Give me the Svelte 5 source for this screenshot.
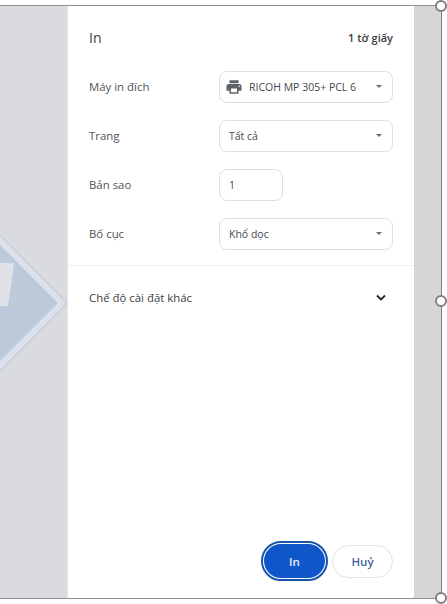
<script>
    const rows = [
        { label: "Máy in đích", value: "RICOH MP 305+ PCL 6", printer: true },
        { label: "Trang", value: "Tất cả" },
        { label: "Bản sao", value: "1", small: true },
        { label: "Bố cục", value: "Khổ dọc" },
    ];
</script>

<div class="page">
    <div class="frame">
        <div class="preview">
            <svg class="sheet" width="67" height="160" viewBox="0 0 67 160">
                <path d="M-1 2 L67 71 L-1 140 Z" fill="#dce2ec" stroke="#c4cedc" stroke-width="1.5" />
                <path d="M0 13 L58 71 L0 129 Z" fill="#bccadb" />
                <path d="M0 31 H14 L8 74 H0 Z" fill="#e0e2e7" />
            </svg>
        </div>

        <div class="panel">
            <div class="header">
                <h1>In</h1>
                <span class="count">1 tờ giấy</span>
            </div>

            {#each rows as row}
                <div class="row">
                    <span class="label">{row.label}</span>
                    {#if row.small}
                        <div class="field small">{row.value}</div>
                    {:else}
                        <div class="field">
                            {#if row.printer}
                                <svg class="printer" width="18" height="18" viewBox="0 0 24 24">
                                    <path fill="#5f6368" d="M19 8H5c-1.66 0-3 1.34-3 3v6h4v4h12v-4h4v-6c0-1.66-1.34-3-3-3zm-3 11H8v-5h8v5zm3-7c-.55 0-1-.45-1-1s.45-1 1-1 1 .45 1 1-.45 1-1 1zm-1-9H6v4h12V3z" />
                                </svg>
                            {/if}
                            <span class="value">{row.value}</span>
                            <span class="caret"></span>
                        </div>
                    {/if}
                </div>
            {/each}

            <div class="more">
                <span>Chế độ cài đặt khác</span>
                <svg width="12" height="8" viewBox="0 0 12 8">
                    <path d="M2 1.5 L6 5.5 L10 1.5" fill="none" stroke="#26282c" stroke-width="1.8" />
                </svg>
            </div>

            <div class="actions">
                <button class="primary">In</button>
                <button class="secondary">Huỷ</button>
            </div>
        </div>

        <div class="strip"></div>

        <span class="handle top"></span>
        <span class="handle middle"></span>
        <span class="handle bottom"></span>
    </div>
</div>

<style>
    :global(body) {
        background: #fff;
    }

    .page {
        width: 447px;
        height: 604px;
        padding-top: 5px;
        box-sizing: border-box;
        font-family: "Open Sans", "Noto Sans", sans-serif;
        overflow: hidden;
    }

    .frame {
        position: relative;
        display: flex;
        width: 442px;
        height: 594px;
        box-sizing: border-box;
        border-top: 1px solid #8f8f8f;
        border-bottom: 1px solid #8f8f8f;
        border-right: 1px solid #7f7f7f;
    }

    .preview {
        position: relative;
        width: 67px;
        flex: none;
        background: #dadbe0;
        border-right: 1px solid #e6e6e8;
        box-sizing: content-box;
        overflow: hidden;
    }

    .sheet {
        position: absolute;
        left: 0;
        top: 226px;
    }

    .panel {
        width: 346px;
        flex: none;
        display: flex;
        flex-direction: column;
        background: #fff;
        box-sizing: border-box;
    }

    .strip {
        flex: 1;
        background: #d6d6d6;
    }

    .header {
        display: flex;
        justify-content: space-between;
        align-items: center;
        padding: 19px 21px 0 21px;
        height: 44px;
        box-sizing: border-box;
        margin-bottom: 20px;
    }

    h1 {
        margin: 0;
        font-size: 14px;
        font-weight: 400;
        color: #3c4043;
    }

    .count {
        font-size: 11px;
        font-weight: 600;
        color: #3c4043;
    }

    .row {
        display: flex;
        align-items: center;
        height: 33px;
        padding: 0 21px;
        margin-bottom: 16px;
    }

    .label {
        width: 130px;
        flex: none;
        font-size: 11.4px;
        color: #50545a;
    }

    .field {
        flex: 1;
        height: 32px;
        display: flex;
        align-items: center;
        box-sizing: border-box;
        padding: 0 10px 0 9px;
        border: 1px solid #dcdfe3;
        border-radius: 8px;
        font-size: 10.5px;
        color: #45484d;
    }

    .field.small {
        flex: none;
        width: 64px;
    }

    .printer {
        margin-left: -4px;
        margin-right: 6px;
    }

    .value {
        flex: 1;
    }

    .caret {
        width: 0;
        height: 0;
        border-left: 3.5px solid transparent;
        border-right: 3.5px solid transparent;
        border-top: 3.5px solid #6a6d72;
    }

    .more {
        display: flex;
        justify-content: space-between;
        align-items: center;
        margin-top: -1px;
        padding: 0 27px 0 21px;
        height: 63px;
        border-top: 1px solid #efefef;
        font-size: 11.4px;
        color: #3c4043;
    }

    .actions {
        margin-top: auto;
        display: flex;
        justify-content: flex-end;
        align-items: center;
        gap: 4px;
        padding: 0 21px 17px 0;
    }

    button {
        font-family: inherit;
        font-size: 11.5px;
        font-weight: 600;
        border-radius: 17px;
        cursor: pointer;
    }

    .primary {
        width: 61px;
        height: 34px;
        margin: 3px;
        border: none;
        color: #e8eefb;
        background: #0f56c9;
        outline: 2px solid #1a55ad;
        outline-offset: 1px;
    }

    .secondary {
        width: 61px;
        height: 33px;
        border: 1px solid #dfe2e8;
        background: #fff;
        color: #3e659f;
    }

    .handle {
        position: absolute;
        right: -6px;
        width: 8px;
        height: 8px;
        border: 2px solid #808080;
        border-radius: 50%;
        background: #fff;
    }

    .handle.top {
        top: -6px;
    }

    .handle.middle {
        top: 289px;
    }

    .handle.bottom {
        bottom: -6px;
    }
</style>
